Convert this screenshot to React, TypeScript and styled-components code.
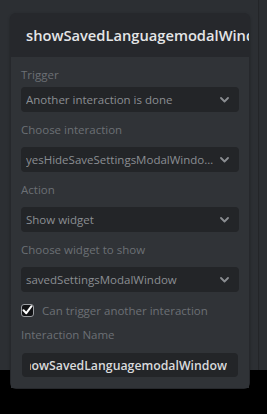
import React from "react";
import styled, { createGlobalStyle } from "styled-components";

const Global = createGlobalStyle`
  html, body { margin: 0; padding: 0; background: #000; }
  body { font-family: "Open Sans", "Noto Sans", sans-serif; }
  * { box-sizing: border-box; }
`;

const Page = styled.div`
  width: 267px;
  height: 414px;
  display: flex;
  background: linear-gradient(#2c2f33 0 370px, #000 370px);
`;

const Main = styled.div`
  flex: 1;
  padding: 13px 0 0 10px;
`;

const SideRail = styled.div`
  width: 9px;
  height: 370px;
  background: #2a2d31;
  border-left: 1px solid #232528;
`;

const Panel = styled.div`
  width: 240px;
  background: #26282c;
  border-radius: 6px;
  padding: 0 1px 1px;
  box-shadow: 0 1px 3px rgba(0, 0, 0, 0.3);
`;

const Header = styled.div`
  height: 44px;
  display: flex;
  align-items: center;
  padding-left: 15px;
  overflow: hidden;
  white-space: nowrap;
  font-size: 14.7px;
  font-weight: 600;
  color: #e4e5e7;
`;

const Body = styled.div`
  background: #303337;
  padding: 10px 10px 11px;
  display: flex;
  flex-direction: column;
`;

const Label = styled.div<{ $gap: number }>`
  font-size: 11.5px;
  line-height: 16px;
  color: #6c7075;
  margin-bottom: ${(p) => p.$gap}px;
`;

const Select = styled.div`
  height: 25px;
  background: #232528;
  border-radius: 4px;
  display: flex;
  align-items: center;
  padding: 0 10px 0 5px;
  margin-bottom: 10px;
  font-size: 11.5px;
  color: #8b8e93;
`;

const SelectText = styled.span`
  flex: 1;
  white-space: nowrap;
  overflow: hidden;
  text-overflow: ellipsis;
  padding-right: 6px;
`;

const CheckRow = styled.label`
  height: 16px;
  display: flex;
  align-items: center;
  gap: 8px;
  margin-bottom: 9px;
  font-size: 11.5px;
  color: #6c7075;
`;

const CheckBox = styled.span`
  width: 13px;
  height: 13px;
  border-radius: 3px;
  background: #111214;
  border: 1px solid #9a9da1;
  display: flex;
  align-items: center;
  justify-content: center;
`;

const NameInput = styled.div`
  height: 24px;
  margin: 0 1px;
  background: #232528;
  border-radius: 4px;
  display: flex;
  align-items: center;
  padding: 0 11px 0 8px;
`;

const NameTrack = styled.div`
  flex: 1;
  display: flex;
  justify-content: flex-end;
  overflow: hidden;
  font-size: 12.3px;
  font-weight: 600;
  color: #d9dadc;
  white-space: nowrap;
`;

const Chevron = () => (
  <svg width="9" height="6" viewBox="0 0 9 6" fill="none">
    <path d="M1 1l3.5 3.5L8 1" stroke="#8a8d91" strokeWidth="1.8" strokeLinecap="round" strokeLinejoin="round" />
  </svg>
);

const Check = () => (
  <svg width="11" height="10" viewBox="0 0 11 10" fill="none">
    <path d="M1.5 5.2l2.8 3L9.5 1.2" stroke="#ffffff" strokeWidth="2" strokeLinecap="round" strokeLinejoin="round" />
  </svg>
);

const fields: { label: string; value: string; gap: number }[] = [
  { label: "Trigger", value: "Another interaction is done", gap: 4 },
  { label: "Choose interaction", value: "yesHideSaveSettingsModalWindowInteraction", gap: 9 },
  { label: "Action", value: "Show widget", gap: 9 },
  { label: "Choose widget to show", value: "savedSettingsModalWindow", gap: 9 },
];

export default function App() {
  return (
    <>
      <Global />
      <Page>
        <Main>
          <Panel>
            <Header>showSavedLanguagemodalWindow</Header>
            <Body>
              {fields.map((f) => (
                <React.Fragment key={f.label}>
                  <Label $gap={f.gap}>{f.label}</Label>
                  <Select>
                    <SelectText>{f.value}</SelectText>
                    <Chevron />
                  </Select>
                </React.Fragment>
              ))}
              <CheckRow>
                <CheckBox>
                  <Check />
                </CheckBox>
                Can trigger another interaction
              </CheckRow>
              <Label $gap={10}>Interaction Name</Label>
              <NameInput>
                <NameTrack>showSavedLanguagemodalWindow</NameTrack>
              </NameInput>
            </Body>
          </Panel>
        </Main>
        <SideRail />
      </Page>
    </>
  );
}
